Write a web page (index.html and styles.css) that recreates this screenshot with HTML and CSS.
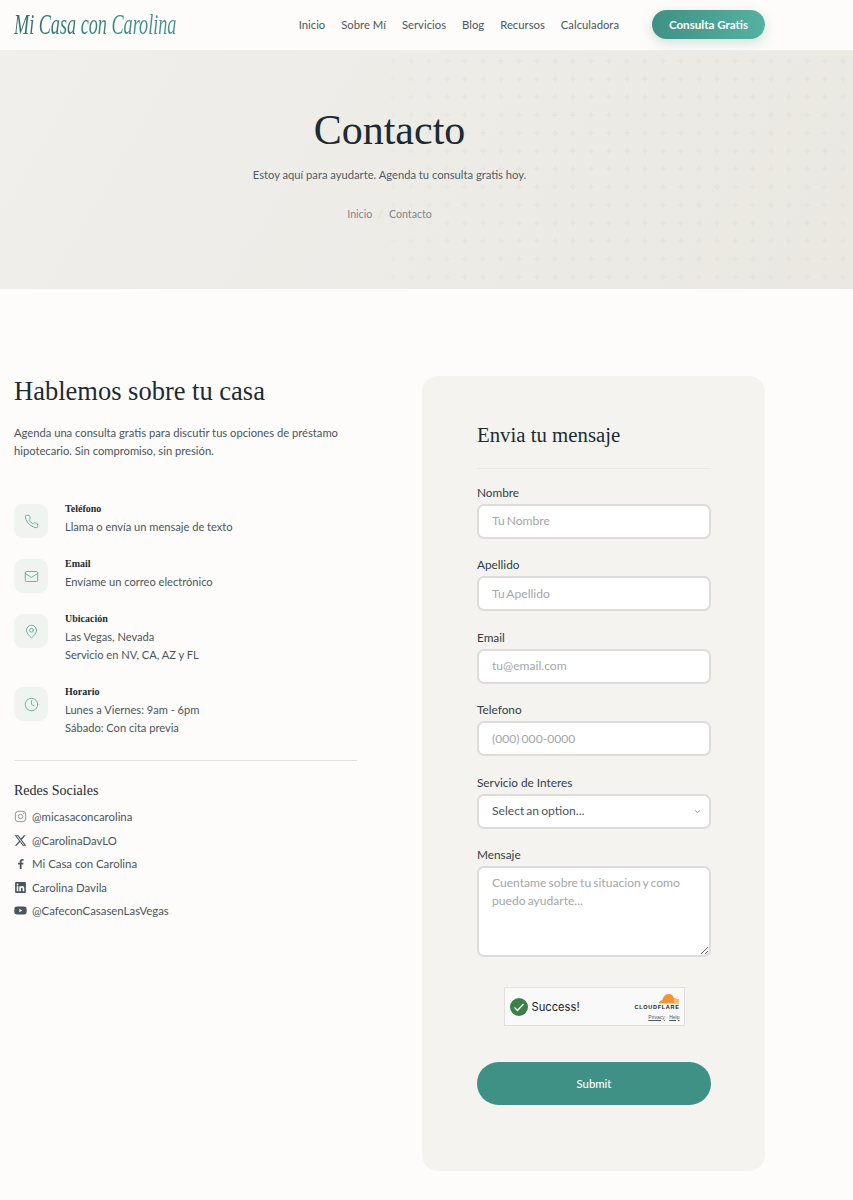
FILE: index.html
```html
<!DOCTYPE html>
<html lang="es">
<head>
  <meta charset="UTF-8" />
  <meta name="viewport" content="width=device-width, initial-scale=1.0" />
  <title>Contacto - Mi Casa con Carolina</title>
  <link rel="stylesheet" href="styles.css">
</head>
<body>
<header class="site-header">
  <div class="header-inner">
    <a class="logo" href="#"><span>Mi Casa con Carolina</span></a>
    <nav class="main-nav">
      <a href="#">Inicio</a>
      <a href="#">Sobre Mí</a>
      <a href="#">Servicios</a>
      <a href="#">Blog</a>
      <a href="#">Recursos</a>
      <a href="#">Calculadora</a>
    </nav>
    <a class="cta" href="#">Consulta Gratis</a>
  </div>
</header>

<section class="hero">
  <svg class="hero-pattern" width="100%" height="100%" aria-hidden="true">
    <defs>
      <pattern id="plus" width="18" height="18" patternUnits="userSpaceOnUse">
        <path d="M6 10h6M9 7v6" stroke="#e3e1da" stroke-width="1" fill="none" />
      </pattern>
    </defs>
    <rect width="100%" height="100%" fill="url(#plus)" />
  </svg>
  <div class="hero-content">
    <h1>Contacto</h1>
    <p class="hero-sub">Estoy aquí para ayudarte. Agenda tu consulta gratis hoy.</p>
    <div class="breadcrumb">
      <a href="#">Inicio</a>
      <span class="sep">/</span>
      <span>Contacto</span>
    </div>
  </div>
</section>

<main class="contact">
  <div class="info">
    <h2>Hablemos sobre tu casa</h2>
    <p class="intro">Agenda una consulta gratis para discutir tus opciones de préstamo hipotecario. Sin compromiso, sin presión.</p>

    <div class="info-list">
      <div class="info-row">
        <div class="info-icon">
          <svg viewBox="0 0 24 24"><path d="M22 16.9v3a2 2 0 0 1-2.2 2 19.8 19.8 0 0 1-8.6-3.1 19.5 19.5 0 0 1-6-6A19.8 19.8 0 0 1 2.1 4.2 2 2 0 0 1 4.1 2h3a2 2 0 0 1 2 1.7c.1 1 .4 1.9.7 2.8a2 2 0 0 1-.5 2.1L8.1 9.9a16 16 0 0 0 6 6l1.3-1.3a2 2 0 0 1 2.1-.4c.9.3 1.8.6 2.8.7a2 2 0 0 1 1.7 2z"/></svg>
        </div>
        <div class="info-text">
          <h4>Teléfono</h4>
          <p>Llama o envía un mensaje de texto</p>
        </div>
      </div>
      <div class="info-row">
        <div class="info-icon">
          <svg viewBox="0 0 24 24"><rect x="2" y="4" width="20" height="16" rx="2"/><path d="M22 7l-10 6.5L2 7"/></svg>
        </div>
        <div class="info-text">
          <h4>Email</h4>
          <p>Envíame un correo electrónico</p>
        </div>
      </div>
      <div class="info-row">
        <div class="info-icon">
          <svg viewBox="0 0 24 24"><path d="M20 10c0 6-8 12-8 12s-8-6-8-12a8 8 0 0 1 16 0z"/><circle cx="12" cy="10" r="3"/></svg>
        </div>
        <div class="info-text">
          <h4>Ubicación</h4>
          <p>Las Vegas, Nevada</p>
          <p>Servicio en NV, CA, AZ y FL</p>
        </div>
      </div>
      <div class="info-row">
        <div class="info-icon">
          <svg viewBox="0 0 24 24"><circle cx="12" cy="12" r="10"/><path d="M12 6v6l4 2"/></svg>
        </div>
        <div class="info-text">
          <h4>Horario</h4>
          <p>Lunes a Viernes: 9am - 6pm</p>
          <p>Sábado: Con cita previa</p>
        </div>
      </div>
    </div>

    <div class="social">
      <h4>Redes Sociales</h4>
      <a href="#">
        <svg class="line" viewBox="0 0 24 24"><rect x="2.500" y="2.500" width="19" height="19" rx="5"/><circle cx="12" cy="12" r="4"/><circle cx="17.500" cy="6.500" r=".6"/></svg>
        @micasaconcarolina
      </a>
      <a href="#">
        <svg viewBox="0 0 24 24"><path d="M18.200 2.300h3.300l-7.200 8.200 8.500 11.200h-6.700l-5.200-6.800-6 6.800H1.700l7.700-8.800L1.300 2.300h6.800l4.700 6.200zm-1.200 17.400h1.800L7.100 4.100h-2z"/></svg>
        @CarolinaDavLO
      </a>
      <a href="#">
        <svg viewBox="0 0 24 24"><path d="M14 22v-8h3l.5-3.500H14V8.600c0-1 .4-1.700 1.800-1.700h1.800V3.800c-.4 0-1.400-.2-2.600-.2-2.600 0-4.400 1.600-4.400 4.500v2.400H7.500V14h3.100v8z"/></svg>
        Mi Casa con Carolina
      </a>
      <a href="#">
        <svg viewBox="0 0 24 24"><path d="M20.500 2h-17A1.500 1.500 0 0 0 2 3.500v17A1.500 1.500 0 0 0 3.500 22h17a1.500 1.500 0 0 0 1.500-1.500v-17A1.500 1.500 0 0 0 20.500 2zM8 19H5V9.500h3zM6.500 8.200a1.700 1.700 0 1 1 0-3.400 1.700 1.700 0 0 1 0 3.400zM19 19h-3v-4.700c0-1.200-.4-2-1.500-2-.9 0-1.400.6-1.600 1.200-.1.200-.1.500-.1.800V19h-3V9.500h3v1.300c.4-.6 1.200-1.500 2.800-1.500 2 0 3.400 1.300 3.400 4.100z"/></svg>
        Carolina Davila
      </a>
      <a href="#">
        <svg viewBox="0 0 24 24"><path d="M23 7.200a3 3 0 0 0-2.100-2.100C19 4.600 12 4.600 12 4.600s-7 0-8.900.5A3 3 0 0 0 1 7.200 31 31 0 0 0 .5 12 31 31 0 0 0 1 16.800a3 3 0 0 0 2.100 2.100c1.900.5 8.900.5 8.900.5s7 0 8.900-.5a3 3 0 0 0 2.100-2.100 31 31 0 0 0 .5-4.800 31 31 0 0 0-.5-4.800zM9.800 15.300V8.700l5.700 3.300z"/></svg>
        @CafeconCasasenLasVegas
      </a>
    </div>
  </div>

  <form class="form-card" onsubmit="return false">
    <h3>Envia tu mensaje</h3>

    <label class="field">
      <span>Nombre</span>
      <input type="text" placeholder="Tu Nombre" />
    </label>
    <label class="field">
      <span>Apellido</span>
      <input type="text" placeholder="Tu Apellido" />
    </label>
    <label class="field">
      <span>Email</span>
      <input type="email" placeholder="tu@email.com" />
    </label>
    <label class="field">
      <span>Telefono</span>
      <input type="tel" placeholder="(000) 000-0000" />
    </label>
    <label class="field">
      <span>Servicio de Interes</span>
      <div class="select-wrap">
        <select>
          <option>Select an option...</option>
        </select>
        <svg class="chevron" viewBox="0 0 10 6"><path d="M1.500 1.500L5 4.500l3.500-3"/></svg>
      </div>
    </label>
    <label class="field">
      <span>Mensaje</span>
      <textarea placeholder="Cuentame sobre tu situacion y como puedo ayudarte..."></textarea>
    </label>

    <div class="turnstile">
      <div class="ts-check">
        <svg viewBox="0 0 18 18"><circle cx="9" cy="9" r="9" fill="#3c8049"/><path d="M4.500 9.500l3 3 6-6.500" fill="none" stroke="#fff" stroke-width="1.300"/></svg>
        <span>Success!</span>
      </div>
      <div class="ts-brand">
        <svg class="ts-cloud" viewBox="0 0 22 11"><path d="M1 10.500c0-2 1.500-3.300 3.200-3.300C5 4.500 7 1 10.500 1c3 0 4.800 2 5.400 4.200 2.800-.3 5.100 2 5.100 5.300z" fill="#f0953a"/><path d="M16 6h5v4.500h-5z" fill="#f8b868"/></svg>
        <div class="ts-name">CLOUDFLARE</div>
        <div class="ts-links"><a href="#">Privacy</a> · <a href="#">Help</a></div>
      </div>
    </div>

    <button type="submit">Submit</button>
  </form>
</main>
</body>
</html>
```

FILE: styles.css
```css
* {
  box-sizing: border-box;
}
body {
  margin: 0;
  background: #fdfcfa;
  font-family: "Lato", sans-serif;
  color: #4a5560;
  height: 1200px;
  overflow: hidden;
}
a {
  color: inherit;
  text-decoration: none;
}

/* header */
.site-header {
  height: 51px;
  background: #fdfcfa;
  border-bottom: 1px solid #f0eeea;
}
.header-inner {
  width: 765px;
  height: 48px;
  padding-left: 14px;
  display: flex;
  align-items: center;
}
.logo {
  width: 162px;
  flex: none;
  font-family: "Liberation Serif", serif;
  font-style: italic;
  font-size: 30px;
  color: #3f8f84;
  white-space: nowrap;
}
.logo span {
  display: inline-block;
  transform: scaleX(0.606);
  transform-origin: left center;
  background: linear-gradient(90deg, #2f7269, #45988c);
  -webkit-background-clip: text;
  background-clip: text;
  color: transparent;
}
.main-nav {
  margin-left: auto;
  display: flex;
  gap: 16px;
  font-size: 11.300px;
  color: #4b5661;
}
.cta {
  margin-left: 33px;
  width: 113px;
  height: 29px;
  border-radius: 15px;
  background: linear-gradient(90deg, #3f9185, #55b1a1);
  box-shadow: 0 4px 12px rgba(63, 145, 133, 0.25);
  color: #fff;
  font-size: 11.600px;
  font-weight: 700;
  display: flex;
  align-items: center;
  justify-content: center;
}

/* hero */
.hero {
  position: relative;
  height: 238px;
  background: linear-gradient(120deg, #f0efec, #eae8e1);
}
.hero-pattern {
  position: absolute;
  top: 0;
  right: 0;
  width: 469px;
  height: 100%;
  -webkit-mask-image: linear-gradient(90deg, rgba(0, 0, 0, 0.4), #000 30%);
  mask-image: linear-gradient(90deg, rgba(0, 0, 0, 0.4), #000 30%);
}
.hero-content {
  position: relative;
  width: 751px;
  margin-left: 14px;
  padding-top: 54px;
  text-align: center;
}
.hero h1 {
  margin: 0;
  font-family: "Liberation Serif", serif;
  font-weight: 400;
  font-size: 42px;
  line-height: 50px;
  color: #1c2b33;
}
.hero-sub {
  margin: 11px 0 0;
  font-size: 11.200px;
  line-height: 18px;
  color: #515c65;
}
.breadcrumb {
  margin-top: 21px;
  font-size: 10.600px;
  line-height: 18px;
  color: #7f878d;
  display: flex;
  justify-content: center;
  gap: 6px;
}
.sep {
  color: #dddbd5;
}

/* contact section */
.contact {
  width: 765px;
  padding: 87px 0 0 14px;
  display: grid;
  grid-template-columns: 343px 343px;
  column-gap: 65px;
  align-items: start;
}
.info h2 {
  margin: -2px 0 0;
  font-family: "Liberation Serif", serif;
  font-weight: 400;
  font-size: 26.500px;
  line-height: 34px;
  color: #1c2b33;
}
.intro {
  margin: 16px 0 0;
  font-size: 11.200px;
  line-height: 18px;
}
.info-list {
  margin-top: 44px;
  display: flex;
  flex-direction: column;
  gap: 19px;
  padding-bottom: 19px;
  border-bottom: 1px solid #e2e1dd;
}
.info-row {
  display: flex;
  gap: 17px;
}
.info-icon {
  width: 34px;
  height: 34px;
  flex: none;
  border-radius: 9px;
  background: #eff4f1;
  display: flex;
  align-items: center;
  justify-content: center;
}
.info-icon svg {
  width: 15px;
  height: 15px;
  fill: none;
  stroke: #5fa89c;
  stroke-width: 1.400;
  stroke-linecap: round;
  stroke-linejoin: round;
}
.info-text {
  margin-top: -4px;
  padding-bottom: 4px;
}
.info-row h4 {
  margin: 0;
  font-family: "Liberation Serif", serif;
  font-size: 10px;
  font-weight: 700;
  line-height: 18px;
  color: #1c2b33;
}
.info-row p {
  margin: 0;
  font-size: 11.100px;
  line-height: 18px;
}
.social {
  padding-top: 20px;
}
.social h4 {
  margin: 0 0 4px;
  font-family: "Liberation Serif", serif;
  font-size: 14px;
  font-weight: 400;
  line-height: 20px;
  color: #1c2b33;
}
.social a {
  display: flex;
  align-items: center;
  gap: 5px;
  height: 23.500px;
  font-size: 11.400px;
}
.social svg {
  width: 13px;
  height: 13px;
  flex: none;
  fill: #4a5560;
}
.social svg.line {
  fill: none;
  stroke: #7a8289;
  stroke-width: 1.500;
}

/* form */
.form-card {
  height: 795px;
  padding: 42px 54px 0 55px;
  background: #f4f3f0;
  border-radius: 16px;
}
.form-card h3 {
  margin: 0 0 14.500px;
  padding-bottom: 16px;
  border-bottom: 1px solid #eae9e5;
  font-family: "Liberation Serif", serif;
  font-weight: 400;
  font-size: 20.800px;
  line-height: 34px;
  color: #1c2b33;
}
.field {
  display: block;
  margin-bottom: 17.500px;
}
.field span {
  display: block;
  font-size: 11.800px;
  line-height: 17px;
  margin-bottom: 3px;
  color: #333d45;
}
.field input,
.field select,
.field textarea {
  display: block;
  width: 100%;
  height: 35px;
  padding: 0 13px 1px;
  background: #fff;
  border: 2px solid #dddcd8;
  border-radius: 7px;
  font-family: "Lato", sans-serif;
  font-size: 12.100px;
  word-spacing: -1px;
  color: #4a5560;
  outline: none;
}
.field textarea {
  height: 91px;
  padding: 6px 13px;
  line-height: 18px;
  resize: vertical;
}
.field input::placeholder,
.field textarea::placeholder {
  color: #a3a7aa;
}
.select-wrap {
  position: relative;
}
.field select {
  appearance: none;
}
.chevron {
  position: absolute;
  right: 10px;
  top: 15px;
  width: 7px;
  height: 5px;
  fill: none;
  stroke: #6b747b;
  stroke-width: 1;
}
.turnstile {
  width: 181px;
  height: 39px;
  margin: 30px auto 36px;
  padding: 0 4px 0 5px;
  display: flex;
  align-items: center;
  justify-content: space-between;
  background: #f9f9f9;
  border: 1px solid #e0e0e0;
}
.ts-check {
  display: flex;
  align-items: center;
  gap: 4px;
  font-family: "Inter", sans-serif;
  font-size: 11.200px;
  color: #232323;
}
.ts-check svg {
  width: 18px;
  height: 18px;
}
.ts-brand {
  display: flex;
  flex-direction: column;
  align-items: flex-end;
}
.ts-cloud {
  width: 22px;
  height: 11px;
}
.ts-name {
  font-family: "Liberation Sans", sans-serif;
  font-size: 5.500px;
  font-weight: 700;
  letter-spacing: 0.7px;
  line-height: 7px;
  color: #222;
}
.ts-links {
  margin-top: 3px;
  font-family: "Liberation Sans", sans-serif;
  font-size: 5px;
  line-height: 7px;
  color: #555;
}
.ts-links a {
  text-decoration: underline;
}
.form-card button {
  display: block;
  width: 100%;
  height: 43px;
  padding-bottom: 2px;
  background: #3f9185;
  color: #fff;
  border: none;
  border-radius: 22px;
  font-family: "Lato", sans-serif;
  font-size: 11.300px;
  font-weight: 500;
  cursor: pointer;
}
```
